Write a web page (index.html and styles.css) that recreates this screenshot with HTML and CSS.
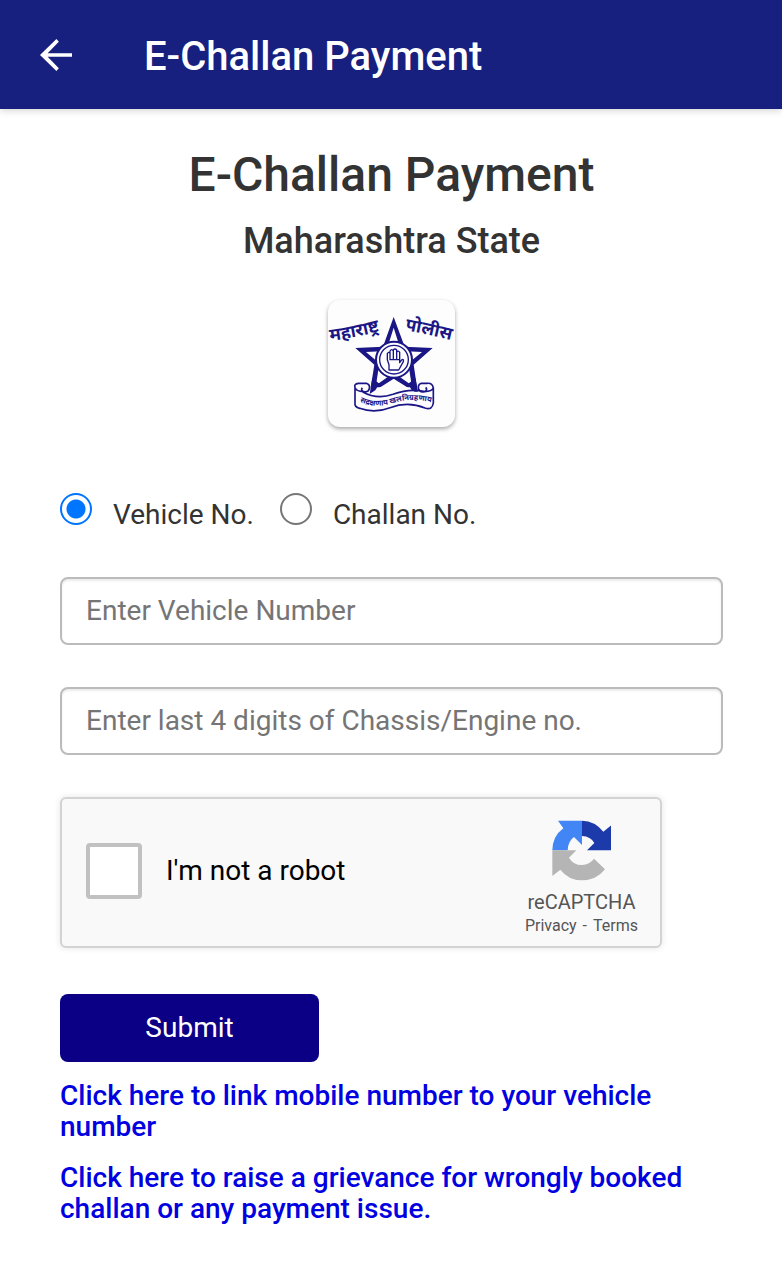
FILE: index.html
```html
<!DOCTYPE html>
<html lang="en">
<head>
	<meta charset="UTF-8">
	<meta name="viewport" content="width=device-width, initial-scale=1">
	<title>E-Challan Payment</title>
	<link rel="stylesheet" href="styles.css">
</head>
<body>
	<header class="topbar">
		<a class="back" href="#" aria-label="Back">
			<svg viewBox="4 4 16 16" width="32" height="32"><path fill="#fff" d="M20 11.1H7.83l5.59-5.69L12.2 4l-8.2 8 8.2 8 1.22-1.41L7.83 12.9H20z"/></svg>
		</a>
		<span class="topbar-title">E-Challan Payment</span>
	</header>

	<main class="content">
		<h1>E-Challan Payment</h1>
		<h2>Maharashtra State</h2>

		<!-- police emblem -->
		<div class="logo">
			<svg viewBox="24 28 381 381" width="127" height="127" role="img" aria-label="Maharashtra Police">
				<defs>
					<path id="arcLeft" d="M31 151Q108 141 192 118"/>
					<path id="arcRight" d="M254 118Q328 132 402 151"/>
					<path id="ribbonText" d="M119 333Q165 355 220 337T340 337"/>
				</defs>
				<path fill="#1b1685" fill-rule="evenodd" d="M221 79L254 168L338 172L281 222L294 310L221 264L149 310L163 222L106 172L189 168ZM221 111L199 181L138 184L178 218L168 284L221 246L275 284L265 218L306 184L243 181Z"/>
				<g fill="none" stroke="#1b1685">
					<circle cx="222" cy="207" r="54" fill="#fdfdff" stroke-width="6"/>
					<circle cx="222" cy="207" r="43" stroke-width="4"/>
					<path stroke-width="4" stroke-linejoin="round" d="M207 238V222L202 207V189Q206 182 210 188V207V181Q215 173 220 181V207V178Q225 172 230 178V207V184Q235 178 239 185V216L246 207Q252 205 250 213L236 238ZM211 207H238"/>
					<path stroke-width="5" fill="#fdfdff" stroke-linejoin="round" d="M105 290Q101 280 115 278H139Q151 282 148 294Q145 306 131 303Q121 299 127 291M105 290V336Q103 350 119 353Q164 369 210 351Q264 331 315 352Q337 359 340 337V292Q337 276 321 278H304Q292 282 296 295Q300 307 314 303Q324 298 317 290M127 303Q171 328 219 311Q269 292 315 303M105 290Q108 302 131 303M340 292Q336 302 314 303"/>
				</g>
				<path fill="#1b1685" d="M157 262L149 310L166 299L178 279ZM286 262L294 302L274 297L265 279Z"/>
				<g class="logo-name">
					<text><textPath href="#arcLeft">महाराष्ट्र</textPath></text>
					<text><textPath href="#arcRight">पोलीस</textPath></text>
				</g>
				<g class="logo-motto"><text><textPath href="#ribbonText">सद्रक्षणाय खलनिग्रहणाय</textPath></text></g>
			</svg>
		</div>

		<form class="challan-form">
			<div class="radio-row">
				<label><input type="radio" name="searchBy" checked><span>Vehicle No.</span></label>
				<label><input type="radio" name="searchBy"><span>Challan No.</span></label>
			</div>

			<input class="text-box" type="text" aria-label="Vehicle Number" placeholder="Enter Vehicle Number">
			<input class="text-box" type="text" aria-label="Chassis or Engine number" placeholder="Enter last 4 digits of Chassis/Engine no.">

			<div class="captcha">
				<label class="captcha-check"><input type="checkbox"><span>I'm not a robot</span></label>
				<div class="captcha-brand">
					<svg viewBox="124 90 180 183" width="60" height="61" aria-hidden="true">
						<path fill="#1c3aa9" d="M217 92Q256 93 281 125L305 106V181H232L254 159Q243 139 217 138Z"/>
						<path fill="#4285f4" d="M217 92H145L161 115Q129 138 128 181H174Q175 153 193 141L217 165Z"/>
						<path fill="#b5b5b5" d="M128 181H200L178 203Q190 225 217 225Q240 224 253 206L286 238Q260 271 217 271Q177 271 152 239L128 258Z"/>
					</svg>
					<span class="captcha-name">reCAPTCHA</span>
					<span class="captcha-links"><a href="#">Privacy</a><span>-</span><a href="#">Terms</a></span>
				</div>
			</div>

			<button class="submit" type="submit">Submit</button>
		</form>

		<div class="links">
			<a href="#">Click here to link mobile number to your vehicle number</a>
			<a href="#">Click here to raise a grievance for wrongly booked challan or any payment issue.</a>
		</div>
	</main>
</body>
</html>
```
FILE: styles.css
```css
*{
	box-sizing: border-box;
}

body{
	margin: 0;
	background-color: #fff;
	color: #333;
	font-family: Roboto, "Noto Sans", sans-serif;
	font-size: 28px;
	line-height: 32px;
}

/* top bar */
.topbar{
	display: flex;
	align-items: center;
	gap: 72px;
	height: 109px;
	padding: 0 40px;
	background-color: #17207f;
	box-shadow: 0 1px 8px rgba(0, 0, 0, 0.2);
	color: #fff;
}

.back,
.back svg{
	display: block;
}

.topbar-title{
	padding-top: 4px;
	font-size: 40px;
	font-weight: 500;
	line-height: 48px;
}

/* page */
.content{
	padding: 36px 59px 56px 60px;
}

h1,
h2{
	margin: 0;
	font-weight: 500;
	text-align: center;
}

h1{
	font-size: 48px;
	line-height: 60px;
}

h2{
	margin-top: 12px;
	font-size: 36px;
	line-height: 48px;
}

.logo{
	width: 127px;
	margin: 35px auto 66px;
	border-radius: 12px;
	background-color: #fdfdfd;
	box-shadow: 0 2px 4px rgba(0, 0, 0, 0.35);
}

.logo svg{
	display: block;
}

.logo text{
	fill: #1b1685;
	font-weight: 700;
}

.logo-name{
	font-size: 53px;
}

.logo-motto{
	font-size: 23px;
}

/* form */
.challan-form{
	display: flex;
	flex-direction: column;
	align-items: flex-start;
}

.radio-row{
	display: flex;
	gap: 26px;
	margin-bottom: 42px;
}

.radio-row label{
	display: flex;
	gap: 21px;
	height: 42px;
}

.radio-row span{
	padding-top: 6px;
}

.radio-row input{
	appearance: none;
	width: 32px;
	height: 32px;
	margin: 0;
	border: 2px solid #767676;
	border-radius: 50%;
	background-color: #fff;
}

.radio-row input:checked{
	border-color: #0075ff;
	background-image: radial-gradient(circle, #0075ff 9px, #fff 10px);
}

.text-box{
	width: 100%;
	height: 68px;
	margin: 0 0 42px;
	padding: 0 24px 2px;
	border: 2px solid #bbb;
	border-radius: 8px;
	background-color: #fff;
	box-shadow: inset 0 2px 2px rgba(0, 0, 0, 0.08);
	color: #333;
	font: inherit;
}

.text-box::placeholder{
	color: #757575;
}

.captcha{
	display: flex;
	align-items: center;
	justify-content: space-between;
	width: 100%;
	max-width: 602px;
	height: 151px;
	margin-bottom: 46px;
	padding: 0 22px 4px 24px;
	border: 2px solid #d3d3d3;
	border-radius: 6px;
	background-color: #f9f9f9;
	box-shadow: 0 0 6px 1px rgba(0, 0, 0, 0.08);
}

.captcha-check{
	display: flex;
	align-items: center;
	gap: 24px;
	color: #000;
}

.captcha-check input{
	appearance: none;
	width: 56px;
	height: 56px;
	margin: 0;
	border: 4px solid #c1c1c1;
	border-radius: 4px;
	background-color: #fff;
}

.captcha-brand{
	display: flex;
	flex-direction: column;
	align-items: center;
	padding-top: 16px;
	color: #555;
}

.captcha-name{
	margin-top: 9px;
	font-size: 20px;
	line-height: 24px;
}

.captcha-links{
	display: flex;
	gap: 6px;
	font-size: 16px;
	line-height: 24px;
}

.captcha-links a{
	color: inherit;
	text-decoration: none;
}

.submit{
	width: 259px;
	height: 68px;
	border: 0;
	border-radius: 8px;
	background-color: #0b0085;
	color: #fff;
	font: inherit;
}

/* bottom links */
.links{
	display: flex;
	flex-direction: column;
	gap: 20px;
	margin-top: 18px;
}

.links a{
	color: #0000e0;
	font-weight: 500;
	line-height: 31px;
	text-decoration: none;
}
```
